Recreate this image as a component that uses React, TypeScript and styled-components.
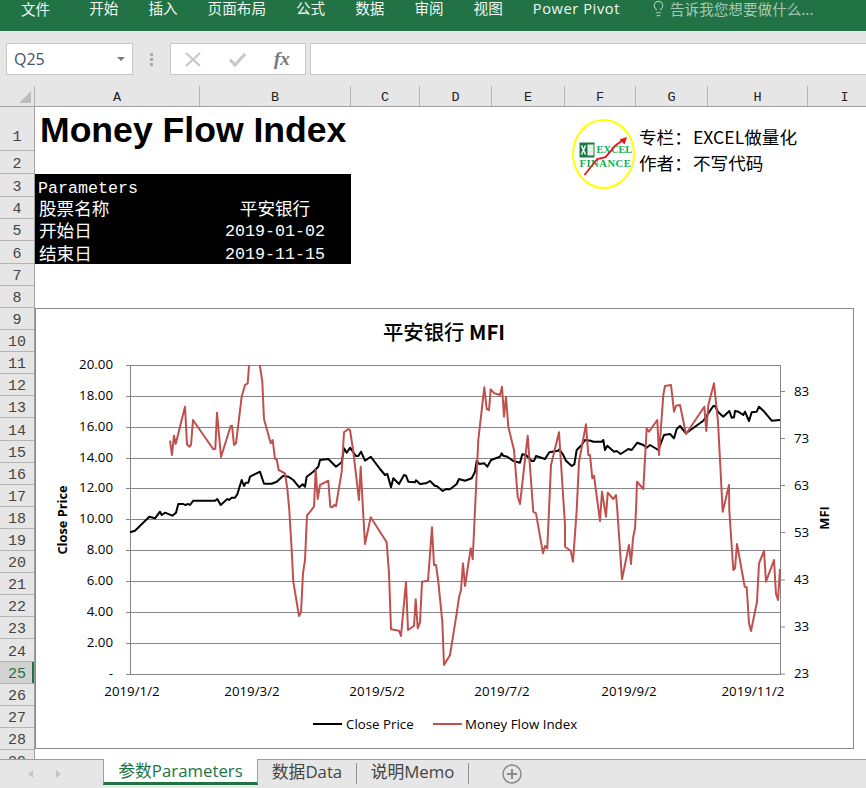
import React from "react";
import styled, { createGlobalStyle } from "styled-components";
import { Lightbulb } from "lucide-react";

const CJK = `"Noto Sans CJK SC", sans-serif`;
const UI = `"Open Sans", "Noto Sans CJK SC", sans-serif`;
const GRAY = "#e6e6e6";
const GREEN = "#217346";

const Global = createGlobalStyle`
  html, body { margin: 0; padding: 0; background: #fff; }
  body { width: 866px; height: 788px; overflow: hidden; font-family: ${CJK}; }
`;

const Page = styled.div`
  width: 866px;
  height: 788px;
  display: flex;
  flex-direction: column;
  overflow: hidden;
  background: ${GRAY};
`;

/* ---------- ribbon ---------- */
const Ribbon = styled.div`
  height: 31px;
  flex: none;
  background: ${GREEN};
  display: flex;
  align-items: flex-start;
  gap: 30px;
  padding-left: 21px;
  color: #f2f7f4;
`;
const RibbonTab = styled.span<{ $file?: boolean; $latin?: boolean }>`
  font: 400 14.6px/16px ${UI};
  white-space: nowrap;
  margin-right: ${(p) => (p.$file ? "9px" : "0")};
  letter-spacing: ${(p) => (p.$latin ? "0.6px" : "0")};
  position: relative;
  top: ${(p) => (p.$file ? "1px" : "0")};
`;
const TellMe = styled.span`
  display: flex;
  align-items: center;
  gap: 3px;
  font: 400 14.6px/16px ${CJK};
  color: #a6c9b5;
  white-space: nowrap;
  flex: none;
`;

/* ---------- formula bar ---------- */
const FormulaBar = styled.div`
  height: 32px;
  flex: none;
  margin-top: 12px;
  display: flex;
  align-items: stretch;
  padding-left: 6px;
`;
const NameBox = styled.div`
  width: 127px;
  box-sizing: border-box;
  background: #fff;
  border: 1px solid #c8c8c8;
  display: flex;
  align-items: center;
  justify-content: space-between;
  padding: 0 7px;
  font: 400 16px "Open Sans", sans-serif;
  color: #44546a;
`;
const Caret = styled.span`
  width: 0;
  height: 0;
  border-left: 4px solid transparent;
  border-right: 4px solid transparent;
  border-top: 4px solid #777;
`;
const Grip = styled.div`
  width: 37px;
  flex: none;
  display: flex;
  align-items: center;
  justify-content: center;
`;
const GripDots = styled.span`
  width: 3px;
  height: 13px;
  background: repeating-linear-gradient(#aaa 0 3px, transparent 3px 5px);
`;
const FxBox = styled.div`
  width: 136px;
  box-sizing: border-box;
  background: #fff;
  border: 1px solid #c8c8c8;
  display: flex;
  align-items: center;
  gap: 28px;
  padding-left: 14px;
`;
const Fx = styled.span`
  font: italic 700 19px "Liberation Serif", serif;
  color: #777;
`;
const FormulaInput = styled.div`
  flex: 1;
  margin-left: 4px;
  background: #fff;
  border: 1px solid #c8c8c8;
  border-right: none;
`;

/* ---------- headers ---------- */
const ColumnBar = styled.div`
  height: 20px;
  flex: none;
  margin-top: 11px;
  display: flex;
  border-bottom: 1px solid #9f9f9f;
  overflow: hidden;
`;
const Corner = styled.div`
  width: 35px;
  flex: none;
  box-sizing: border-box;
  border-right: 1px solid #b4b4b4;
  position: relative;
  &::after {
    content: "";
    position: absolute;
    right: 3px;
    bottom: 3px;
    border-left: 12px solid transparent;
    border-bottom: 12px solid #bdbdbd;
  }
`;
const ColHead = styled.div<{ $w: number }>`
  width: ${(p) => p.$w}px;
  flex: none;
  box-sizing: border-box;
  border-right: 1px solid #b4b4b4;
  text-align: center;
  font: 400 13.5px/23px "Liberation Mono", monospace;
  color: #222;
`;
const Body = styled.div`
  flex: 1;
  display: flex;
  min-height: 0;
  overflow: hidden;
`;
const RowHeads = styled.div`
  width: 35px;
  flex: none;
  box-sizing: border-box;
  border-right: 1px solid #9f9f9f;
  overflow: hidden;
`;
const RowHead = styled.div<{ $h: number; $on?: boolean }>`
  height: ${(p) => p.$h}px;
  box-sizing: border-box;
  border-bottom: 1px solid #b4b4b4;
  display: flex;
  align-items: flex-end;
  justify-content: center;
  padding-bottom: ${(p) => (p.$h > 40 ? "4px" : "0")};
  font: 400 15px/16px "Liberation Mono", monospace;
  color: ${(p) => (p.$on ? GREEN : "#444")};
  background: ${(p) => (p.$on ? "#d2d2d2" : GRAY)};
  box-shadow: ${(p) => (p.$on ? `inset -2px 0 0 ${GREEN}` : "none")};
`;

/* ---------- sheet ---------- */
const Sheet = styled.div`
  flex: 1;
  background: #fff;
  overflow: hidden;
`;
const TopBand = styled.div`
  display: flex;
  align-items: flex-start;
`;
const LeftBlock = styled.div`
  width: 316px;
  flex: none;
`;
const Title = styled.h1`
  margin: 0 0 0 5px;
  height: 67px;
  font: 700 35.6px/46px "Liberation Sans", Arial, sans-serif;
  color: #000;
  white-space: nowrap;
`;
const Params = styled.div`
  background: #000;
  color: #fff;
  height: 90px;
  display: grid;
  grid-template-columns: 164px 152px;
  grid-template-rows: 23px 22px 22px 23px;
  align-items: center;
`;
const ParamCode = styled.span`
  grid-column: 1 / 3;
  padding: 6px 0 0 3px;
  font: 400 16.67px/17px "Liberation Mono", monospace;
`;
const ParamLabel = styled.span`
  padding-left: 4px;
  font: 400 17.6px/22px ${CJK};
  white-space: nowrap;
`;
const ParamValue = styled.span`
  text-align: center;
  padding-top: 4px;
  font: 400 16.67px/18px "Liberation Mono", ${CJK};
  white-space: nowrap;
`;
const ParamValueCn = styled(ParamValue)`
  padding-top: 0;
  font: 400 17.6px/22px ${CJK};
`;
const Credit = styled.div`
  margin: 11px 0 0 221px;
  display: flex;
  flex: none;
  gap: 3px;
`;
const CreditText = styled.div`
  display: grid;
  grid-template-columns: 54px auto;
  grid-auto-rows: 26px;
  margin-top: 6px;
  font: 400 17.6px/26px ${CJK};
  color: #000;
  white-space: nowrap;
`;
const ChartFrame = styled.div`
  margin-top: 44px;
  width: 819px;
  height: 441px;
  box-sizing: border-box;
  border: 1px solid #8a8a8a;
  background: #fff;
  svg { display: block; }
`;

/* ---------- tabs ---------- */
const TabBar = styled.div`
  height: 29px;
  flex: none;
  box-sizing: border-box;
  border-top: 1px solid #9f9f9f;
  background: ${GRAY};
  display: flex;
  align-items: flex-start;
`;
const Nav = styled.div`
  width: 103px;
  height: 27px;
  flex: none;
  display: flex;
  align-items: center;
  gap: 23px;
  padding-left: 28px;
  box-sizing: border-box;
`;
const NavArrow = styled.span<{ $right?: boolean }>`
  width: 0;
  height: 0;
  border-top: 4.5px solid transparent;
  border-bottom: 4.5px solid transparent;
  ${(p) => (p.$right ? "border-left: 5px solid #c4c4c4;" : "border-right: 5px solid #c4c4c4;")}
`;
const ActiveTab = styled.div`
  width: 155px;
  flex: none;
  margin-top: -1px;
  box-sizing: border-box;
  background: #fff;
  border: 1px solid #9f9f9f;
  border-top: none;
  border-bottom: 3px solid ${GREEN};
  height: 26px;
  text-align: center;
  font: 400 16.8px/23px ${UI};
  color: ${GREEN};
  white-space: nowrap;
`;
const SheetTab = styled.div<{ $w: number }>`
  width: ${(p) => p.$w}px;
  flex: none;
  box-sizing: border-box;
  height: 21px;
  margin-top: 3px;
  border-right: 1px solid #8f8f8f;
  text-align: center;
  font: 400 16.8px/17px ${UI};
  color: #444;
  white-space: nowrap;
`;
const AddTab = styled.div`
  margin-left: 32px;
  display: flex;
  align-items: center;
  height: 27px;
`;

/* ---------- chart data (traced) ---------- */
type Seg = [number, number, string];
const Z6 = [120, 355] as const;
const Z7 = [120, 510] as const;
const Z8 = [450, 355] as const;
const Z9 = [450, 510] as const;
const seg = (o: readonly [number, number], s: string): Seg => [o[0], o[1], s];
const toPts = (segs: Seg[]) =>
  segs
    .flatMap(([ox, oy, s]) =>
      s.trim().split(/\s+/).map((p) => {
        const [x, y] = p.split(",").map(Number);
        return `${(ox + x / 3).toFixed(1)},${(oy + y / 3).toFixed(1)}`;
      })
    )
    .join(" ");

const closeLine = toPts([
  seg(Z7, "30,67 45,62 88,20 105,25 120,5 125,15 135,8 157,17 168,8"),
  seg(Z6, "175,447 190,447 195,450 205,447 210,450 220,437 285,437 292,432 302,450 322,432 327,435 335,428 345,428 352,418 365,375 372,393 377,383 385,383 390,365 420,350 432,386 455,386 470,380 490,362 505,365 520,375 538,397 548,388 555,395 560,365 580,350 595,335 600,315 625,312 648,335 665,322 672,280 680,293 690,278 708,303 715,303 723,290 735,317 752,305 780,342 795,360 802,357 813,397 820,370 837,387 852,360 858,362 865,380 885,382 888,376 900,387 918,385 930,378 945,393 950,393 968,408 978,402 988,403"),
  seg(Z8, "0,403 20,387 27,372 45,377 65,370 75,350 80,317 88,327 103,325 112,335 123,315 150,305 155,295 160,302 172,305 190,318 210,323 217,298 228,300 245,318 252,318 258,303 285,312 298,292 325,287 328,283 338,297 348,317 365,333 373,328 380,285 395,270 405,255 422,257 430,260 455,260 460,255 465,285 472,272 492,290 500,288 512,297 535,282 545,285 562,263 580,270 590,278 600,270 625,285 642,240 660,237 672,250 680,222 690,213 708,235 760,197 790,153 795,153 805,172 820,185 838,168 845,188 852,187 855,168 865,170 880,180 885,170 897,198 905,172 920,170 927,155 940,167 965,197 990,195"),
]);

const mfiLine = toPts([
  seg(Z6, "150,257 156,300 162,242 167,267 195,155 201,268 208,275 213,270 219,195 280,283 286,281 291,173 303,306 332,213 336,212 342,270 348,265 365,125 375,90 383,85 388,20 418,20 427,80 432,192 452,265 458,255 465,312 470,313 476,345 495,355 502,400"),
  seg(Z7, "508,0 515,120 520,215 537,318 543,307 549,190 555,150 561,17"),
  seg(Z6, "582,455 587,345 593,432 600,390 625,377 631,455 637,457 642,450 648,453 665,350 672,232 685,222 690,225 700,290 717,435 722,335"),
  seg(Z7, "729,0 735,102 752,22 800,97 807,190 813,358 837,362 843,378 858,215 864,360 882,348 887,268 893,355 900,337 906,215 924,212 936,52 942,165 948,165 955,215 967,335 972,465 987,440"),
  seg(Z9, "0,435 20,310 27,262 33,240 39,160 45,228 62,115 68,148 75,0"),
  seg(Z8, "85,255 103,97 110,162 117,165 122,103 133,115 150,120 156,95 162,185 168,125 175,215 192,285 203,425 210,447 233,242 250,470 258,475"),
  seg(Z9, "279,130 285,108 292,115 297,0"),
  seg(Z8, "303,330 327,232 345,510"),
  seg(Z9, "345,110 362,122 369,155 380,0"),
  seg(Z8, "387,320 408,208 415,300 420,300 427,370 432,362 450,498 456,410 468,485 473,413 490,432 498,420"),
  seg(Z9, "502,0 516,208 537,105 543,162 549,85 555,55 558,0"),
  seg(Z8, "561,380 580,402 590,220 597,230 622,195 627,300 640,120 645,93 663,90 672,170 678,152 690,150 708,237 763,155 769,228 775,150 792,85 804,200 818,470 837,390"),
  seg(Z9, "838,0 850,180 855,175 861,102 884,230 890,232 897,340 903,363 921,275 927,160 942,122 948,215 972,150 978,252 984,270 990,177"),
]);

const GRID_Y = [365.5, 396.5, 427.5, 458.5, 488.5, 519.5, 550.5, 581.5, 612.5, 643.5, 674.5];
const LEFT = ["20.00", "18.00", "16.00", "14.00", "12.00", "10.00", "8.00", "6.00", "4.00", "2.00", "-"];
const RIGHT: [string, number][] = [["83", 391.5], ["73", 438.5], ["63", 485.5], ["53", 532.5], ["43", 580], ["33", 627], ["23", 674]];
const DATES: [string, number][] = [["2019/1/2", 132], ["2019/3/2", 252], ["2019/5/2", 377], ["2019/7/2", 502], ["2019/9/2", 629], ["2019/11/2", 753]];

const ChartText = styled.text`
  font-family: "Open Sans", "Noto Sans", sans-serif;
  font-size: 13.3px;
  fill: #000;
`;
const AxisTitle = styled(ChartText)`
  font-weight: 700;
  font-size: 12.8px;
`;
const ChartTitle = styled.text`
  font-family: ${CJK};
  font-weight: 500;
  font-size: 20.4px;
  fill: #000;
`;
const ChartTitleLatin = styled.tspan`
  font-weight: 700;
`;
const LogoWord = styled.text`
  font-family: "Liberation Serif", serif;
  font-weight: 700;
  fill: #0fae54;
`;

const Chart = () => (
  <svg width={817} height={439} viewBox="36 309 817 439">
    <defs>
      <clipPath id="plot">
        <rect x="125" y="365" width="662" height="312" />
      </clipPath>
    </defs>
    <ChartTitle x="444" y="340" textAnchor="middle">平安银行 <ChartTitleLatin>MFI</ChartTitleLatin></ChartTitle>
    {GRID_Y.map((y) => (
      <line key={y} x1="126" x2="781" y1={y} y2={y} stroke="#868686" strokeWidth="1" />
    ))}
    <line x1="130.5" x2="130.5" y1="365" y2="675" stroke="#868686" />
    <line x1="780.5" x2="780.5" y1="365" y2="675" stroke="#868686" />
    {RIGHT.map(([, y]) => (
      <line key={y} x1="781" x2="785" y1={y} y2={y} stroke="#868686" />
    ))}
    {LEFT.map((t, i) => (
      <ChartText key={t} x="113" y={GRID_Y[i] + 3.5} textAnchor="end">{t}</ChartText>
    ))}
    {RIGHT.map(([t, y]) => (
      <ChartText key={t} x="794" y={y + 4}>{t}</ChartText>
    ))}
    {DATES.map(([t, x]) => (
      <ChartText key={t} x={x} y="696" textAnchor="middle">{t}</ChartText>
    ))}
    <AxisTitle transform="translate(67 520) rotate(-90)" textAnchor="middle">Close Price</AxisTitle>
    <AxisTitle transform="translate(829 518) rotate(-90)" textAnchor="middle">MFI</AxisTitle>
    <g clipPath="url(#plot)" fill="none" strokeLinejoin="round">
      <polyline points={closeLine} stroke="#000" strokeWidth="2" />
      <polyline points={mfiLine} stroke="#c0504d" strokeWidth="2" />
    </g>
    <line x1="313" x2="342" y1="724" y2="724" stroke="#000" strokeWidth="2" />
    <ChartText x="346" y="728.5">Close Price</ChartText>
    <line x1="433" x2="462" y1="724" y2="724" stroke="#c0504d" strokeWidth="2" />
    <ChartText x="465" y="728.5">Money Flow Index</ChartText>
  </svg>
);

const Logo = () => (
  <svg width={64} height={72} viewBox="571.5 117.5 64 72">
    <ellipse cx="603" cy="153.5" rx="30.5" ry="34" fill="#fff" stroke="#ffff00" strokeWidth="2" />
    <rect x="579" y="142" width="15" height="15" fill="#1d7a44" />
    <rect x="587" y="144" width="6" height="11" fill="#e5f2ea" />
    <path d="M581 145l4 9M585 145l-4 9" stroke="#fff" strokeWidth="1.4" />
    <LogoWord x="596" y="152.5" fontSize="10.4">EXCEL</LogoWord>
    <LogoWord x="579" y="166" fontSize="10.6" letterSpacing="0.5">FINANCE</LogoWord>
    <polyline points="584,174.5 596.7,158.5 605,156.7 615,145 623,139" fill="none" stroke="#e8141c" strokeWidth="1.8" />
    <polygon points="626.5,136.5 619,139 624,144" fill="#e8141c" />
  </svg>
);

const COLS: [string, number][] = [["A", 165], ["B", 151], ["C", 69], ["D", 72], ["E", 73], ["F", 71], ["G", 72], ["H", 100], ["I", 74]];
const ROWS: number[] = [44, 23, 23, 22, 22, 23, 22, 22, ...Array.from({ length: 21 }, () => 22.1)];

export default function App() {
  return (
    <Page>
      <Global />
      <Ribbon>
        <RibbonTab $file>文件</RibbonTab>
        {["开始", "插入", "页面布局", "公式", "数据", "审阅", "视图"].map((t) => (
          <RibbonTab key={t}>{t}</RibbonTab>
        ))}
        <RibbonTab $latin>Power Pivot</RibbonTab>
        <TellMe>
          <Lightbulb size={17} strokeWidth={1.6} />
          告诉我您想要做什么...
        </TellMe>
      </Ribbon>

      <FormulaBar>
        <NameBox>
          Q25
          <Caret />
        </NameBox>
        <Grip><GripDots /></Grip>
        <FxBox>
          <svg width="16" height="15" viewBox="0 0 16 15">
            <path d="M1 1l14 13M15 1L1 14" stroke="#c8c8c8" strokeWidth="2.2" />
          </svg>
          <svg width="17" height="15" viewBox="0 0 17 15">
            <path d="M1 7.5l5 5.5L16 2" fill="none" stroke="#c8c8c8" strokeWidth="3" />
          </svg>
          <Fx>fx</Fx>
        </FxBox>
        <FormulaInput />
      </FormulaBar>

      <ColumnBar>
        <Corner />
        {COLS.map(([c, w]) => (
          <ColHead key={c} $w={w}>{c}</ColHead>
        ))}
      </ColumnBar>

      <Body>
        <RowHeads>
          {ROWS.map((h, i) => (
            <RowHead key={i} $h={h} $on={i === 24}>{i + 1}</RowHead>
          ))}
        </RowHeads>
        <Sheet>
          <TopBand>
            <LeftBlock>
              <Title>Money Flow Index</Title>
              <Params>
                <ParamCode>Parameters</ParamCode>
                <ParamLabel>股票名称</ParamLabel>
                <ParamValueCn>平安银行</ParamValueCn>
                <ParamLabel>开始日</ParamLabel>
                <ParamValue>2019-01-02</ParamValue>
                <ParamLabel>结束日</ParamLabel>
                <ParamValue>2019-11-15</ParamValue>
              </Params>
            </LeftBlock>
            <Credit>
              <Logo />
              <CreditText>
                <span>专栏：</span>
                <span>EXCEL做量化</span>
                <span>作者：</span>
                <span>不写代码</span>
              </CreditText>
            </Credit>
          </TopBand>
          <ChartFrame>
            <Chart />
          </ChartFrame>
        </Sheet>
      </Body>

      <TabBar>
        <Nav>
          <NavArrow />
          <NavArrow $right />
        </Nav>
        <ActiveTab>参数Parameters</ActiveTab>
        <SheetTab $w={99}>数据Data</SheetTab>
        <SheetTab $w={112}>说明Memo</SheetTab>
        <AddTab>
          <svg width="22" height="22" viewBox="0 0 22 22">
            <circle cx="11" cy="11" r="9" fill="none" stroke="#8a8a8a" strokeWidth="1.5" />
            <path d="M11 6v10M6 11h10" stroke="#8a8a8a" strokeWidth="2" />
          </svg>
        </AddTab>
      </TabBar>
    </Page>
  );
}
